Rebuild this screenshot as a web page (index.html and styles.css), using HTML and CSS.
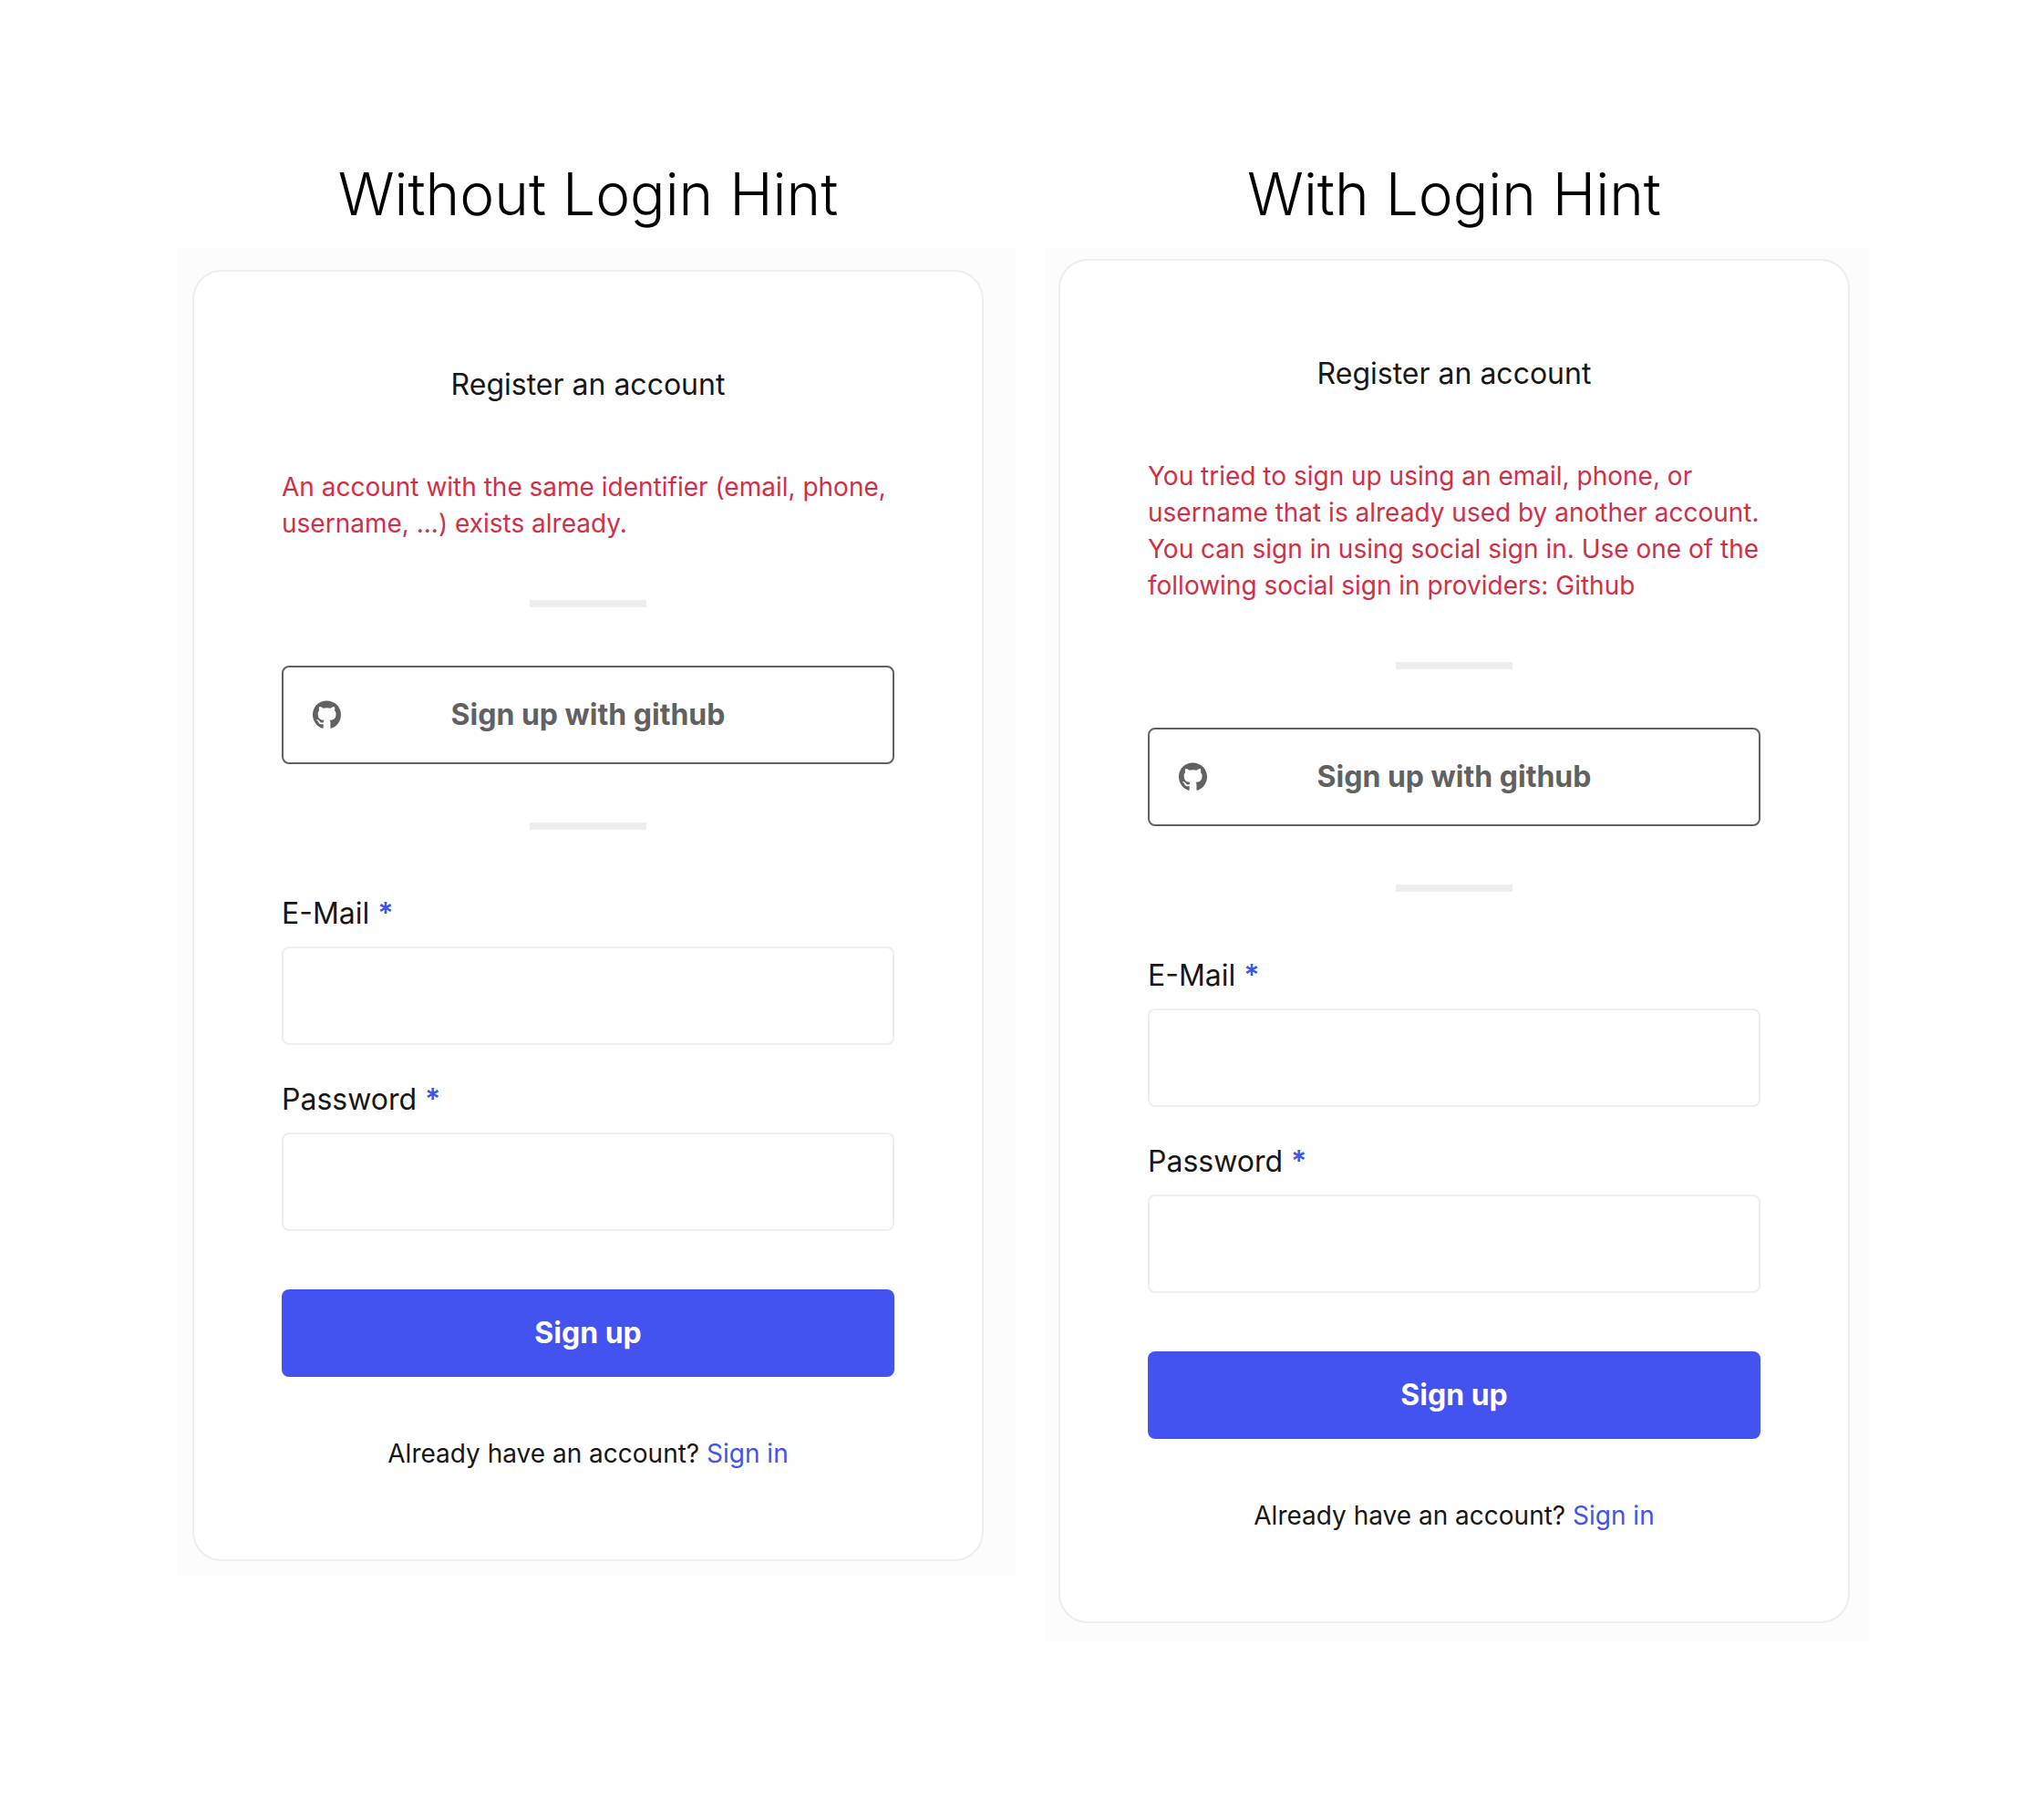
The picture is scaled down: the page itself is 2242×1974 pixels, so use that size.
FILE: index.html
```html
<!DOCTYPE html>
<html lang="en">
<head>
<meta charset="utf-8">
<title>Register an account: login hints</title>
<meta name="viewport" content="width=device-width, initial-scale=1">
<link rel="stylesheet" href="styles.css">
</head>
<body>
<svg width="0" height="0" class="sprite" aria-hidden="true">
  <symbol id="github-mark" viewBox="0 0 496 512">
    <path d="M165.900 397.400c0 2-2.300 3.600-5.200 3.600-3.300.3-5.600-1.300-5.600-3.600 0-2 2.300-3.600 5.200-3.600 3-.3 5.600 1.300 5.600 3.600zm-31.100-4.500c-.7 2 1.300 4.300 4.300 4.900 2.600 1 5.600 0 6.200-2s-1.300-4.300-4.300-5.200c-2.600-.7-5.500.3-6.200 2.300zm44.200-1.700c-2.900.7-4.900 2.600-4.600 4.900.3 2 2.900 3.300 5.900 2.600 2.900-.7 4.900-2.600 4.600-4.600-.3-1.900-3-3.200-5.900-2.900zM244.800 8C106.100 8 0 113.300 0 252c0 110.900 69.800 205.800 169.500 239.200 12.800 2.300 17.300-5.600 17.300-12.100 0-6.200-.3-40.400-.3-61.400 0 0-70 15-84.700-29.800 0 0-11.400-29.100-27.800-36.600 0 0-22.900-15.700 1.600-15.400 0 0 24.900 2 38.600 25.800 21.900 38.600 58.600 27.500 72.900 20.900 2.300-16 8.800-27.100 16-33.700-55.900-6.200-112.300-14.300-112.300-110.500 0-27.500 7.600-41.300 23.600-58.900-2.600-6.500-11.100-33.300 2.600-67.900 20.900-6.500 69 27 69 27 20-5.600 41.500-8.500 62.800-8.500s42.800 2.900 62.800 8.500c0 0 48.100-33.600 69-27 13.700 34.700 5.200 61.400 2.600 67.900 16 17.700 25.800 31.500 25.800 58.900 0 96.500-58.900 104.200-114.800 110.500 9.200 7.900 17 22.900 17 46.400 0 33.700-.3 75.400-.3 83.600 0 6.500 4.600 14.400 17.300 12.100C428.200 457.800 496 362.900 496 252 496 113.300 383.500 8 244.800 8z"/>
  </symbol>
</svg>
<main class="board">
  <section class="variant variant-plain">
    <h1 class="variant-title">Without Login Hint</h1>
    <div class="panel">
      <form class="card">
        <h2 class="card-title">Register an account</h2>
        <p class="message">An account with the same identifier (email, phone, username, ...) exists already.</p>
        <hr class="divider">
        <button type="button" class="social"><svg class="social-icon" aria-hidden="true"><use href="#github-mark"/></svg><span>Sign up with github</span></button>
        <hr class="divider">
        <div class="fields">
          <div class="field">
            <label for="email-1">E-Mail <span class="required">*</span></label>
            <input id="email-1" type="email">
          </div>
          <div class="field">
            <label for="password-1">Password <span class="required">*</span></label>
            <input id="password-1" type="password">
          </div>
        </div>
        <button type="submit" class="submit">Sign up</button>
        <p class="footer">Already have an account? <a href="#login">Sign in</a></p>
      </form>
    </div>
  </section>
  <section class="variant variant-hint">
    <h1 class="variant-title">With Login Hint</h1>
    <div class="panel">
      <form class="card">
        <h2 class="card-title">Register an account</h2>
        <p class="message">You tried to sign up using an email, phone, or username that is already used by another account. You can sign in using social sign in. Use one of the following social sign in providers: Github</p>
        <hr class="divider">
        <button type="button" class="social"><svg class="social-icon" aria-hidden="true"><use href="#github-mark"/></svg><span>Sign up with github</span></button>
        <hr class="divider">
        <div class="fields">
          <div class="field">
            <label for="email-2">E-Mail <span class="required">*</span></label>
            <input id="email-2" type="email">
          </div>
          <div class="field">
            <label for="password-2">Password <span class="required">*</span></label>
            <input id="password-2" type="password">
          </div>
        </div>
        <button type="submit" class="submit">Sign up</button>
        <p class="footer">Already have an account? <a href="#login">Sign in</a></p>
      </form>
    </div>
  </section>
</main>
</body>
</html>
```
FILE: styles.css
```css
* {
  box-sizing: border-box;
  margin: 0;
}

body {
  background: #fff;
  color: #171717;
  font-family: Inter, "Liberation Sans", sans-serif;
}

.sprite {
  display: block;
}

.board {
  display: grid;
  grid-template-columns: 920fr 902fr;
  align-items: start;
  gap: 34px;
  padding: 173px 193px;
}

.variant-title {
  margin-bottom: 19px;
  color: #000;
  font-size: 64px;
  font-weight: 300;
  line-height: 80px;
  text-align: center;
}

.panel {
  background: #fcfcfc;
}

.variant-plain .variant-title {
  padding: 0 34px 0 18px;
}

.variant-plain .panel {
  padding: 24px 34px 16px 18px;
}

.variant-hint .variant-title {
  padding: 0 20px 0 14px;
}

.variant-hint .panel {
  padding: 12px 20px 20px 14px;
}

.card {
  display: flex;
  flex-direction: column;
  gap: 64px;
  padding: 96px;
  background: #fff;
  border: 2px solid #ededed;
  border-radius: 32px;
}

.card-title {
  font-size: 32px;
  font-weight: 400;
  line-height: 56px;
  text-align: center;
}

.message,
.footer {
  font-size: 28px;
  line-height: 40px;
}

.message {
  color: #d12f45;
}

.divider {
  align-self: center;
  width: 128px;
  height: 8px;
  background: #ededed;
  border: 0;
}

.social,
.submit {
  border-radius: 8px;
  font: 700 32px/56px Inter, "Liberation Sans", sans-serif;
}

.social {
  display: grid;
  grid-template-columns: 31px 1fr 31px;
  align-items: center;
  padding: 24px 32px;
  background: #fff;
  border: 2px solid #616161;
  color: #616161;
}

.social-icon {
  width: 31px;
  height: 32px;
  fill: currentColor;
}

.fields {
  display: flex;
  flex-direction: column;
  gap: 32px;
}

.field {
  display: flex;
  flex-direction: column;
  gap: 8px;
}

.field label {
  font-size: 32px;
  line-height: 56px;
}

.required,
.footer a {
  color: #4253f0;
}

.required {
  font-weight: 600;
}

.field input {
  width: 100%;
  padding: 24px 32px;
  background: #fff;
  border: 2px solid #ededed;
  border-radius: 8px;
  font: 400 32px/56px Inter, "Liberation Sans", sans-serif;
  height: 108px;
}

.submit {
  padding: 20px 32px;
  background: #4253f0;
  border: 0;
  color: #fff;
}

.footer {
  text-align: center;
}

.footer a {
  text-decoration: none;
}
```
